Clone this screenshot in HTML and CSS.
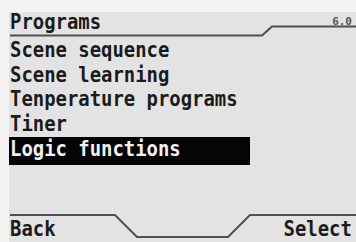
FILE: index.html
```html
<!DOCTYPE html>
<html>
<head>
<meta charset="utf-8">
<link rel="stylesheet" href="styles.css">
</head>
<body>
<div class="screen">
  <div class="header">
    <span class="title lcd">Programs</span>
    <span class="version">6.0</span>
  </div>
  <ul class="menu">
    <li class="item"><span class="lcd">Scene sequence</span></li>
    <li class="item"><span class="lcd">Scene learning</span></li>
    <li class="item"><span class="lcd">Tenperature programs</span></li>
    <li class="item"><span class="lcd">Tiner</span></li>
    <li class="item selected"><span class="lcd">Logic functions</span></li>
  </ul>
  <div class="footer">
    <span class="softkey lcd">Back</span>
    <span class="softkey lcd right">Select</span>
  </div>
</div>
<svg class="frame" width="356" height="242" viewBox="0 0 356 242">
  <path d="M10 35.5 H262 L272 26.5 H356" />
  <path d="M10 215 H115 L137 237 H228 L250 215 H356" />
</svg>
</body>
</html>
```
FILE: styles.css
```css
html, body {
  margin: 0;
  padding: 0;
}
body {
  width: 356px;
  height: 242px;
  overflow: hidden;
  position: relative;
  background: #f3f3f3;
  font-family: "DejaVu Sans Mono", "Liberation Mono", monospace;
  color: #1b1b1b;
}
.screen {
  margin: 12px 0 0 9px;
  height: 230px;
  background: #e3e3e3;
  display: flex;
  flex-direction: column;
  padding: 0 4px 0 1px;
}
.lcd {
  display: inline-block;
  transform: scaleX(0.9);
  transform-origin: left center;
  white-space: pre;
}
.lcd.right {
  transform-origin: right center;
}
.header {
  height: 26px;
  display: flex;
  justify-content: space-between;
  align-items: flex-start;
}
.title {
  font-size: 21px;
  font-weight: bold;
  line-height: 20px;
}
.version {
  font-size: 11px;
  line-height: 12px;
  margin-top: 4px;
  color: #555;
  font-weight: bold;
}
.menu {
  list-style: none;
  margin: 0;
  padding: 0;
}
.item {
  font-size: 21px;
  font-weight: bold;
  line-height: 24.5px;
}
.selected {
  background: #050505;
  color: #f0f0f0;
  width: 240px;
  margin-left: -1px;
  padding-left: 1px;
  padding-bottom: 3px;
  margin-top: 1px;
}
.footer {
  margin-top: auto;
  display: flex;
  justify-content: space-between;
  padding-bottom: 3px;
}
.softkey {
  font-size: 21px;
  font-weight: bold;
  line-height: 20px;
}
.frame {
  position: absolute;
  left: 0;
  top: 0;
  pointer-events: none;
}
.frame path {
  fill: none;
  stroke: #4f4f4f;
  stroke-width: 2;
}
```
